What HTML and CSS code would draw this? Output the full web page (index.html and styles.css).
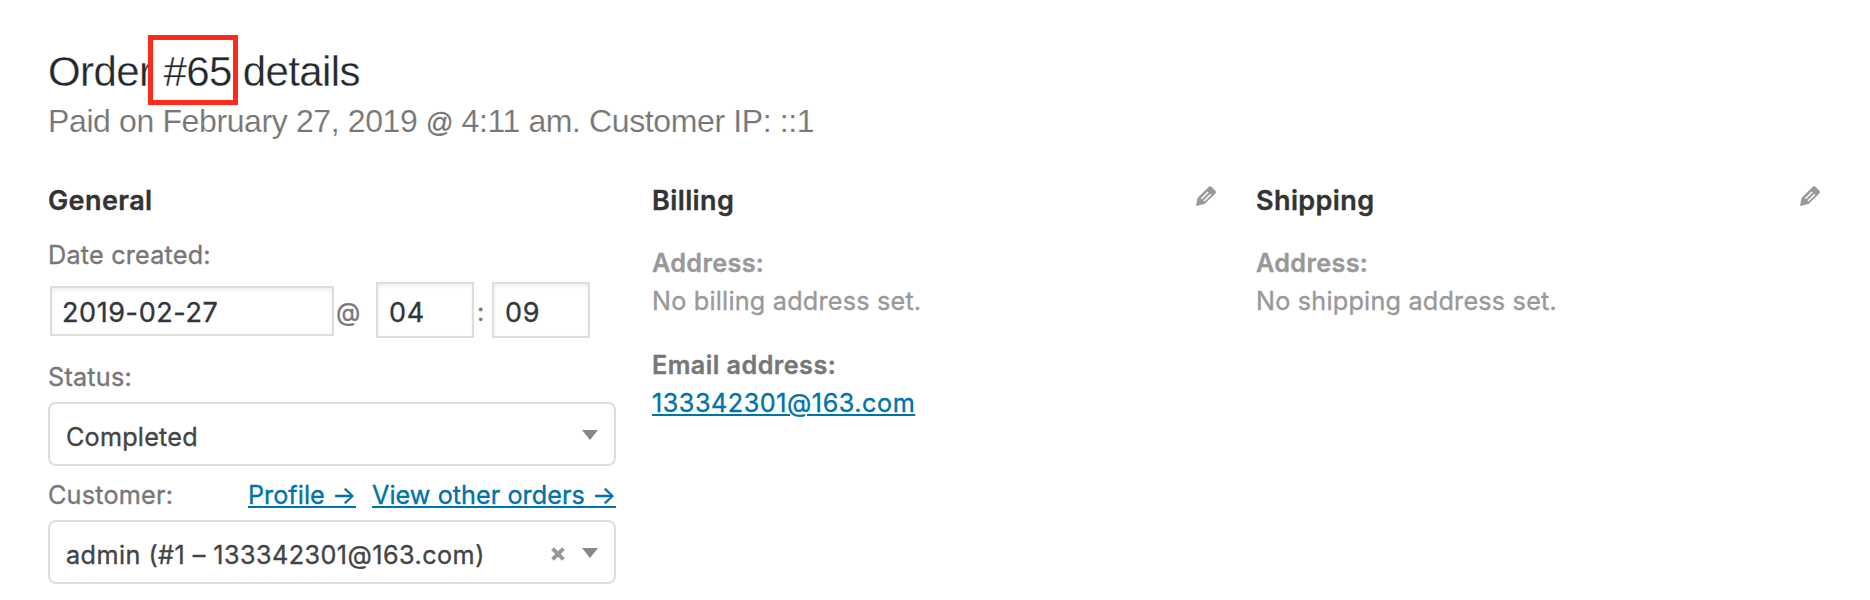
FILE: index.html
```
<!DOCTYPE html>
<html lang="en">
<head>
<meta charset="utf-8">
<title>Order #65 details</title>
<link rel="stylesheet" href="styles.css">
</head>
<body>
<main class="order">
  <header class="order-header">
    <h1 class="order-title">Order #65 details<span class="highlight"></span></h1>
    <p class="order-meta">Paid on February 27, 2019 <span class="meta-at">@</span> 4:11 am. Customer IP: ::1</p>
  </header>
  <div class="columns">
    <section class="column">
      <h2 class="column-title">General</h2>
      <div class="label label-date">Date created:</div>
      <div class="date-row">
        <div class="input input-date">2019-02-27</div>
        <span class="at">@</span>
        <div class="input input-time">04</div>
        <span class="colon">:</span>
        <div class="input input-time">09</div>
      </div>
      <div class="label label-status">Status:</div>
      <div class="select">
        <span class="select-status">Completed</span>
        <svg class="arrow" viewBox="0 0 16 10"><path d="M0 0h16L8 10z"/></svg>
      </div>
      <div class="label label-customer">
        <span>Customer:</span>
        <span class="links"><a class="link" href="#">Profile →</a><a class="link" href="#">View other orders →</a></span>
      </div>
      <div class="select">
        <span class="select-customer">admin (#1 – 133342301@163.com)</span>
        <svg class="clear" viewBox="0 0 14 14"><path d="M1.6 1.6l10.8 10.8M12.4 1.6L1.6 12.4"/></svg>
        <svg class="arrow" viewBox="0 0 16 10"><path d="M0 0h16L8 10z"/></svg>
      </div>
    </section>
    <section class="column">
      <div class="column-head">
        <h2 class="column-title">Billing</h2>
        <svg class="pencil" viewBox="0 0 20 20"><path class="pencil-body" d="M0 20L1.5 12L12.5 1Q14 -.4 15.6 1L19.2 4.6Q20.7 6.2 19.2 7.8L8.5 18Z"/><path class="pencil-line" d="M5.3 12.8L12.2 6M8 15L14.8 8.3"/></svg>
      </div>
      <div class="address">
        <strong class="strong">Address:</strong>
        <span>No billing address set.</span>
      </div>
      <div class="email">
        <strong class="email-label">Email address:</strong>
        <a class="link email-link" href="#">133342301@163.com</a>
      </div>
    </section>
    <section class="column">
      <div class="column-head">
        <h2 class="column-title">Shipping</h2>
        <svg class="pencil" viewBox="0 0 20 20"><path class="pencil-body" d="M0 20L1.5 12L12.5 1Q14 -.4 15.6 1L19.2 4.6Q20.7 6.2 19.2 7.8L8.5 18Z"/><path class="pencil-line" d="M5.3 12.8L12.2 6M8 15L14.8 8.3"/></svg>
      </div>
      <div class="address">
        <strong class="strong">Address:</strong>
        <span>No shipping address set.</span>
      </div>
    </section>
  </div>
</main>
</body>
</html>
```
FILE: styles.css
```
* { box-sizing: border-box; }

body {
  margin: 0;
  background: #fff;
  color: #777;
  font: 400 25.2px/38px Inter, sans-serif;
  letter-spacing: .22px;
  -webkit-text-stroke: .35px currentColor;
}

.order { padding: 47px 42px 0 48px; }

.order-title {
  position: relative;
  margin: 0;
  color: #23282d;
  font: 400 42px/50px "Liberation Sans", sans-serif;
  letter-spacing: -.6px;
  -webkit-text-stroke: .3px #fff;
}

.highlight {
  position: absolute;
  left: 100px;
  top: -12px;
  width: 90px;
  height: 70px;
  border: 5px solid #ff2a1c;
}

.order-meta {
  height: 40px;
  margin: 4px 0 0;
  font: 400 32px/40px "Liberation Sans", sans-serif;
  letter-spacing: -.38px;
  -webkit-text-stroke: .15px #fff;
}

.meta-at {
  font-size: 27px;
  line-height: 1;
  -webkit-text-stroke: .3px currentColor;
}

.columns {
  display: grid;
  grid-template-columns: repeat(3, 568px);
  column-gap: 36px;
  margin-top: 40px;
}

.column-head {
  display: flex;
  justify-content: space-between;
}

.column-title {
  margin: 0;
  color: #333;
  font-size: 27px;
  font-weight: 600;
  line-height: 40px;
  letter-spacing: .4px;
}

.label-date { margin-top: 15px; }
.label-status { margin-top: 20px; }

.label-customer {
  display: flex;
  justify-content: space-between;
  margin-top: 10px;
}

.date-row {
  display: flex;
  align-items: center;
  margin-top: 8px;
  padding-left: 2px;
}

.input {
  border: 2px solid #ddd;
  box-shadow: inset 0 2px 4px rgba(0, 0, 0, .07);
  color: #32373c;
  font-size: 27px;
  letter-spacing: .6px;
}

.input-date {
  width: 284px;
  height: 50px;
  margin-top: 2px;
  padding: 3px 10px 0;
  line-height: 44px;
}

.input-time {
  width: 98px;
  height: 56px;
  padding: 5px 11px 0;
  line-height: 48px;
}

.at {
  width: 42px;
  padding: 4px 0 0 2px;
}

.colon {
  width: 18px;
  padding: 4px 0 0 3px;
}

.select {
  display: flex;
  width: 568px;
  height: 64px;
  margin-top: 6px;
  padding: 6px 16px 0 16px;
  border: 2px solid #ddd;
  border-radius: 8px;
  color: #444;
  line-height: 54px;
}

.select-customer { letter-spacing: .45px; }

.arrow {
  width: 16px;
  height: 10px;
  margin: 20px 0 0 auto;
  fill: #888;
}

.clear {
  width: 14px;
  height: 14px;
  margin: 19px 0 0 auto;
  fill: none;
  stroke: #999;
  stroke-width: 4;
}

.clear + .arrow { margin-left: 17px; }

.links {
  display: flex;
  gap: 16px;
  letter-spacing: .05px;
}

.link {
  color: #0073aa;
  text-decoration: underline;
  text-decoration-thickness: 2px;
  text-underline-offset: 2px;
}

.pencil {
  width: 20px;
  height: 20px;
  margin: 5px 4px 0 0;
}

.pencil-body { fill: #999; }

.pencil-line {
  fill: none;
  stroke: #fff;
  stroke-width: 1.5;
}

.address,
.email {
  display: flex;
  flex-direction: column;
  align-items: flex-start;
}

.address {
  margin-top: 23px;
  color: #999;
}

.email { margin-top: 26px; }

.strong {
  font-weight: 600;
  letter-spacing: .35px;
}

.email-label {
  font-weight: 600;
  letter-spacing: .45px;
}

.email-link { letter-spacing: .53px; }
```
